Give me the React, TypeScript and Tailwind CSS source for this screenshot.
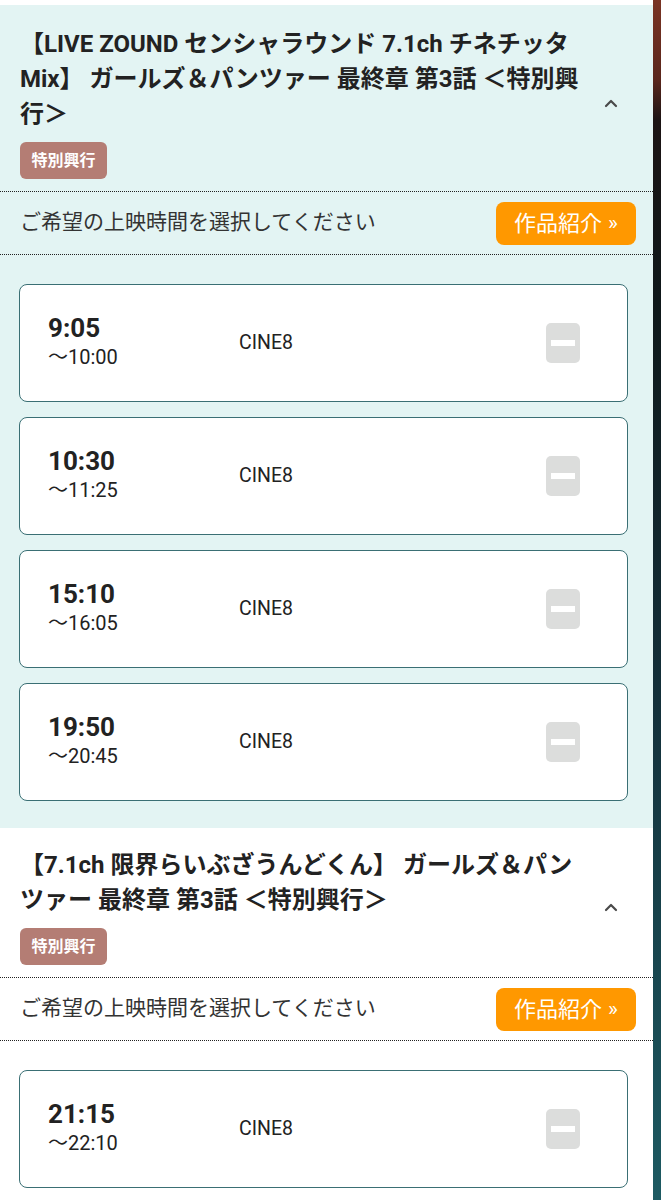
import React from "react";

const FONT = { fontFamily: 'Roboto, "Noto Sans CJK JP", "Noto Sans", sans-serif' };

type Show = { start: string; end: string; screen: string };

function Chevron() {
  return (
    <svg width="14" height="10" viewBox="0 0 14 10" className="block">
      <path d="M2 8 L7 3 L12 8" fill="none" stroke="#4a4a4a" strokeWidth="2.2" strokeLinecap="round" strokeLinejoin="round" />
    </svg>
  );
}

function ShowCard({ s }: { s: Show }) {
  return (
    <div className="h-[118px] bg-white border-[1.5px] border-[#3a6f74] rounded-[8px] flex items-center pl-[28px] pr-[47px]">
      <div className="w-[191px] flex flex-col">
        <span className="text-[26px] leading-[29px] font-bold text-[#222]">{s.start}</span>
        <span className="text-[20px] leading-[29px] text-[#222]">～{s.end}</span>
      </div>
      <div className="flex-1 text-[19.5px] text-[#222]">{s.screen}</div>
      <div className="w-[34px] h-[40px] rounded-[5px] bg-[#dcdddc] flex items-center justify-center">
        <div className="w-[24px] h-[6px] bg-white" />
      </div>
    </div>
  );
}

function Section({
  title,
  shows,
  bg,
  pt,
  pb,
}: {
  title: string;
  shows: Show[];
  bg: string;
  pt: string;
  pb: string;
}) {
  return (
    <section className={`${bg} ${pt} ${pb}`}>
      <div className="flex items-center pl-5">
        <div className="w-[572px]">
          <h2 className="text-[24px] leading-[35px] font-bold text-[#222]">{title}</h2>
          <div className="mt-[10px] inline-flex items-center justify-center w-[87px] h-[37px] rounded-[6px] bg-[#b47d74] text-white text-[16px] font-bold">
            特別興行
          </div>
        </div>
        <div className="flex-1 flex justify-center pr-[26px] pl-[2px]">
          <Chevron />
        </div>
      </div>
      <div className="mt-[12px] border-t border-dotted border-[#222]" />
      <div className="h-[62px] flex items-center justify-between pl-5 pr-[17px]">
        <span className="text-[21px] text-[#333]">ご希望の上映時間を選択してください</span>
        <button className="w-[140px] h-[43px] rounded-[8px] bg-[#ff9800] text-white text-[22px] flex items-center justify-center gap-[6px]">
          <span>作品紹介</span>
          <span className="text-[21px] leading-none">»</span>
        </button>
      </div>
      <div className="border-t border-dotted border-[#222]" />
      <div className="mt-[29px] ml-[19px] mr-[25px] flex flex-col gap-[15px]">
        {shows.map((s) => (
          <ShowCard key={s.start} s={s} />
        ))}
      </div>
    </section>
  );
}

export default function App() {
  return (
    <div className="flex w-[661px] min-h-[1200px] bg-white" style={FONT}>
      <div className="w-[653px] pt-[5px] bg-white">
        <Section
          bg="bg-[#e3f4f3]"
          pt="pt-[22px]"
          pb="pb-[27px]"
          title="【LIVE ZOUND センシャラウンド 7.1ch チネチッタ Mix】 ガールズ＆パンツァー 最終章 第3話 ＜特別興行＞"
          shows={[
            { start: "9:05", end: "10:00", screen: "CINE8" },
            { start: "10:30", end: "11:25", screen: "CINE8" },
            { start: "15:10", end: "16:05", screen: "CINE8" },
            { start: "19:50", end: "20:45", screen: "CINE8" },
          ]}
        />
        <Section
          bg="bg-white"
          pt="pt-[20px]"
          pb="pb-[20px]"
          title="【7.1ch 限界らいぶざうんどくん】 ガールズ＆パンツァー 最終章 第3話 ＜特別興行＞"
          shows={[{ start: "21:15", end: "22:10", screen: "CINE8" }]}
        />
      </div>
      <div className="flex-1 bg-[linear-gradient(180deg,#7a3424_0px,#5a261c_80px,#1c1414_120px,#0f181a_300px,#14303a_700px,#1d5a62_1200px)]" />
    </div>
  );
}
